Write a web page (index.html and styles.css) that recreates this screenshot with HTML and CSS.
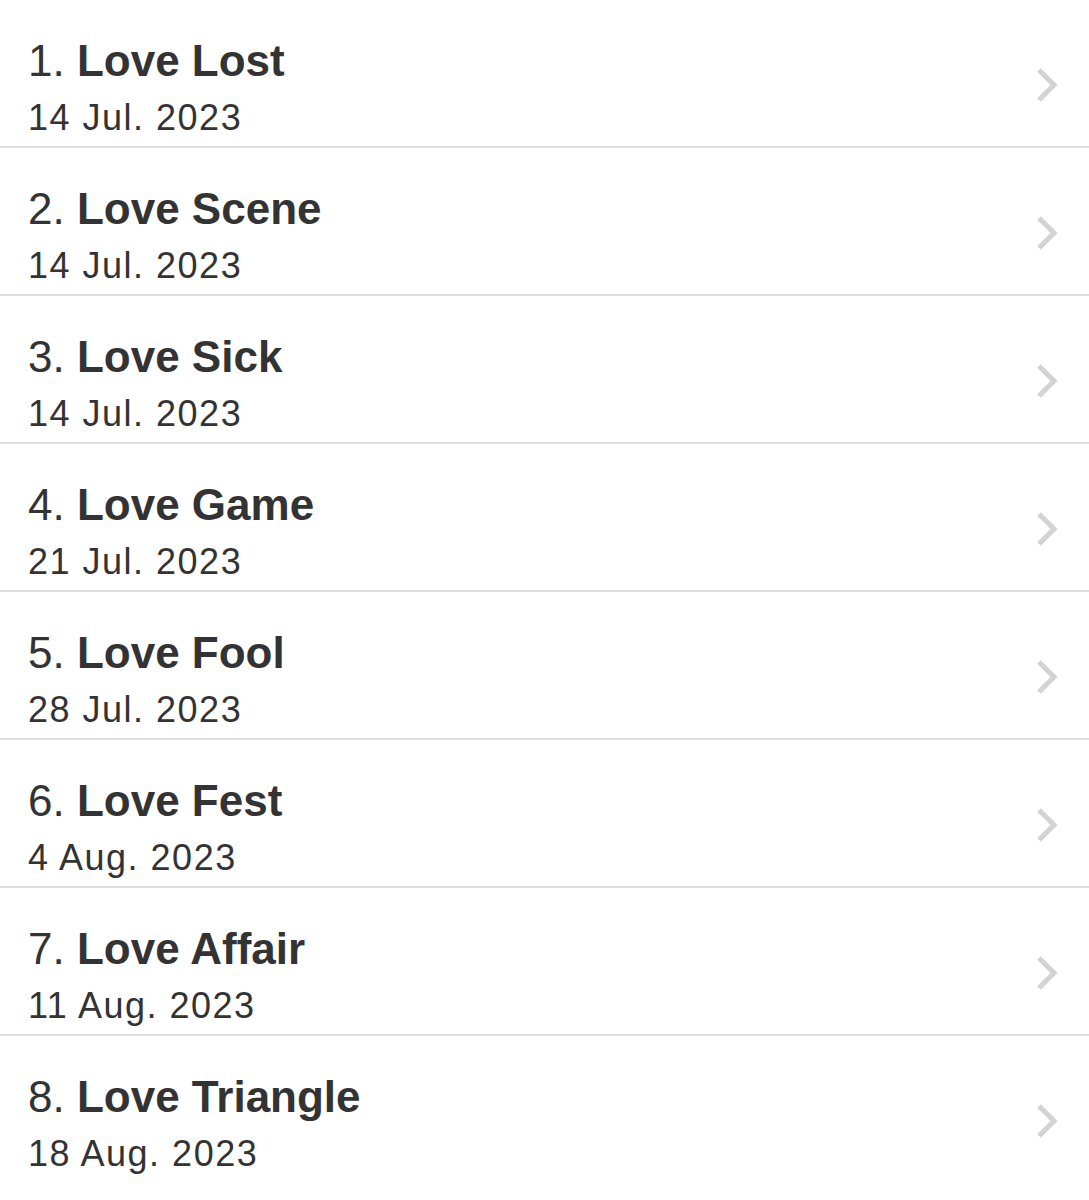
FILE: index.html
```html
<!DOCTYPE html>
<html lang="en">
<head>
    <meta charset="UTF-8">
    <meta name="viewport" content="width=device-width, initial-scale=1.0">
    <title>Episodes</title>
    <link rel="stylesheet" href="styles.css">
</head>
<body>
    <ul class="episode-list">
        <li class="episode">
            <div class="episode-text">
                <div class="episode-title">1. <strong>Love Lost</strong></div>
                <div class="episode-date">14 Jul. 2023</div>
            </div>
            <svg class="chevron" viewBox="0 0 26 40"><path d="M5 5 L20 20 L5 35"/></svg>
        </li>
        <li class="episode">
            <div class="episode-text">
                <div class="episode-title">2. <strong>Love Scene</strong></div>
                <div class="episode-date">14 Jul. 2023</div>
            </div>
            <svg class="chevron" viewBox="0 0 26 40"><path d="M5 5 L20 20 L5 35"/></svg>
        </li>
        <li class="episode">
            <div class="episode-text">
                <div class="episode-title">3. <strong>Love Sick</strong></div>
                <div class="episode-date">14 Jul. 2023</div>
            </div>
            <svg class="chevron" viewBox="0 0 26 40"><path d="M5 5 L20 20 L5 35"/></svg>
        </li>
        <li class="episode">
            <div class="episode-text">
                <div class="episode-title">4. <strong>Love Game</strong></div>
                <div class="episode-date">21 Jul. 2023</div>
            </div>
            <svg class="chevron" viewBox="0 0 26 40"><path d="M5 5 L20 20 L5 35"/></svg>
        </li>
        <li class="episode">
            <div class="episode-text">
                <div class="episode-title">5. <strong>Love Fool</strong></div>
                <div class="episode-date">28 Jul. 2023</div>
            </div>
            <svg class="chevron" viewBox="0 0 26 40"><path d="M5 5 L20 20 L5 35"/></svg>
        </li>
        <li class="episode">
            <div class="episode-text">
                <div class="episode-title">6. <strong>Love Fest</strong></div>
                <div class="episode-date">4 Aug. 2023</div>
            </div>
            <svg class="chevron" viewBox="0 0 26 40"><path d="M5 5 L20 20 L5 35"/></svg>
        </li>
        <li class="episode">
            <div class="episode-text">
                <div class="episode-title">7. <strong>Love Affair</strong></div>
                <div class="episode-date">11 Aug. 2023</div>
            </div>
            <svg class="chevron" viewBox="0 0 26 40"><path d="M5 5 L20 20 L5 35"/></svg>
        </li>
        <li class="episode">
            <div class="episode-text">
                <div class="episode-title">8. <strong>Love Triangle</strong></div>
                <div class="episode-date">18 Aug. 2023</div>
            </div>
            <svg class="chevron" viewBox="0 0 26 40"><path d="M5 5 L20 20 L5 35"/></svg>
        </li>
    </ul>
</body>
</html>
```

FILE: styles.css
```css
* {
    margin: 0;
    padding: 0;
    box-sizing: border-box;
}

body {
    background: #fff;
    font-family: "Liberation Sans", Arial, sans-serif;
    color: #333;
}

.episode-list {
    list-style: none;
}

.episode {
    display: flex;
    align-items: center;
    padding: 33px 29px 1px 28px;
    border-bottom: 2px solid #dedede;
}

.episode:last-child {
    border-bottom-color: transparent;
}

.episode-text {
    flex: 1;
}

.episode-title {
    font-size: 44px;
    line-height: 56px;
}

.episode-title strong {
    font-weight: bold;
}

.episode-date {
    font-size: 36px;
    line-height: 50px;
    letter-spacing: 1.5px;
    margin-top: 4px;
    padding-bottom: 2px;
}

.chevron {
    width: 26px;
    height: 40px;
    margin-bottom: 8px;
    fill: none;
    stroke: #d3d3d3;
    stroke-width: 5;
}
```
